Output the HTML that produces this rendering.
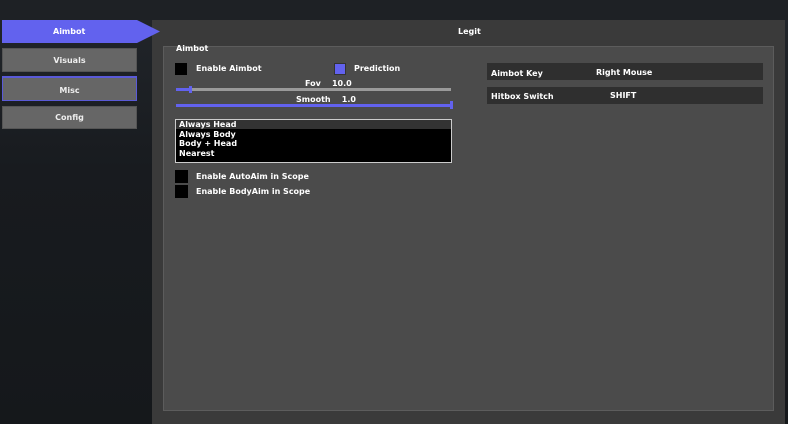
<!DOCTYPE html>
<html><head><style>
*{margin:0;padding:0;box-sizing:border-box}
body{width:788px;height:424px;overflow:hidden;position:relative;background:linear-gradient(180deg,#22262b 0%,#181b1f 40%,#15181b 100%);font-family:"DejaVu Sans","Liberation Sans",sans-serif;font-weight:bold;font-size:8px;color:#fff}
.a{position:absolute}
.btn{position:absolute;left:2px;width:135px;background:#666;border:1px solid #555;text-align:center;color:#eee}
.cb{position:absolute;width:12px;height:12px;background:#000}
.t{position:absolute;white-space:nowrap}
</style></head><body>
<div class="a" style="left:0;top:0;width:788px;height:20px;background:#1e2125"></div>
<div class="a" style="left:152px;top:20px;width:633px;height:404px;background:#3a3a3a"></div>
<div class="a" style="left:163px;top:46px;width:611px;height:365px;background:#4b4b4b;border:1px solid #5c5c5c"></div>
<div class="t" style="left:458px;top:27px">Legit</div>
<svg class="a" style="left:2px;top:20px" width="158" height="24"><polygon points="0,0 135,0 158,11.5 135,23 0,23" fill="#6262ee"/></svg>
<div class="t" style="left:53px;top:27px">Aimbot</div>
<div class="btn" style="top:48px;height:24px;line-height:24px">Visuals</div>
<div class="btn" style="top:76px;height:25px;line-height:25px;border:1px solid #5a5ad8;border-top:2px solid #5a5ad8">Misc</div>
<div class="btn" style="top:106px;height:23px;line-height:22px">Config</div>
<div class="t" style="left:176px;top:44px">Aimbot</div>
<div class="cb" style="left:175px;top:63px"></div>
<div class="t" style="left:196px;top:64px">Enable Aimbot</div>
<div class="cb" style="left:334px;top:63px;background:#6262ee;border:1px solid #333"></div>
<div class="t" style="left:354px;top:64px">Prediction</div>
<div class="t" style="left:305px;top:79px">Fov&nbsp;&nbsp;&nbsp;&nbsp;10.0</div>
<div class="a" style="left:176px;top:88px;width:275px;height:3px;background:#9a9a9a"></div>
<div class="a" style="left:176px;top:88px;width:15px;height:3px;background:#6262ee"></div>
<div class="a" style="left:189px;top:86px;width:3px;height:7px;background:#6262ee"></div>
<div class="t" style="left:296px;top:95px">Smooth&nbsp;&nbsp;&nbsp;&nbsp;1.0</div>
<div class="a" style="left:176px;top:104px;width:276px;height:3px;background:#6262ee"></div>
<div class="a" style="left:450px;top:101px;width:3px;height:8px;background:#6262ee"></div>
<div class="a" style="left:175px;top:119px;width:277px;height:44px;background:#000;border:1px solid #ccc"></div>
<div class="a" style="left:176px;top:120px;width:275px;height:9px;background:#333"></div>
<div class="t" style="left:179px;top:120px;line-height:9.6px">Always Head<br>Always Body<br>Body + Head<br>Nearest</div>
<div class="cb" style="left:175px;top:170px;width:13px;height:13px"></div>
<div class="t" style="left:196px;top:172px">Enable AutoAim in Scope</div>
<div class="cb" style="left:175px;top:185px;width:13px;height:13px"></div>
<div class="t" style="left:196px;top:187px">Enable BodyAim in Scope</div>
<div class="a" style="left:487px;top:63px;width:276px;height:17px;background:#2f2f2f"></div>
<div class="t" style="left:491px;top:69px">Aimbot Key</div>
<div class="t" style="left:596px;top:68px">Right Mouse</div>
<div class="a" style="left:487px;top:87px;width:276px;height:17px;background:#2f2f2f"></div>
<div class="t" style="left:491px;top:92px">Hitbox Switch</div>
<div class="t" style="left:610px;top:91px">SHIFT</div>
</body></html>
